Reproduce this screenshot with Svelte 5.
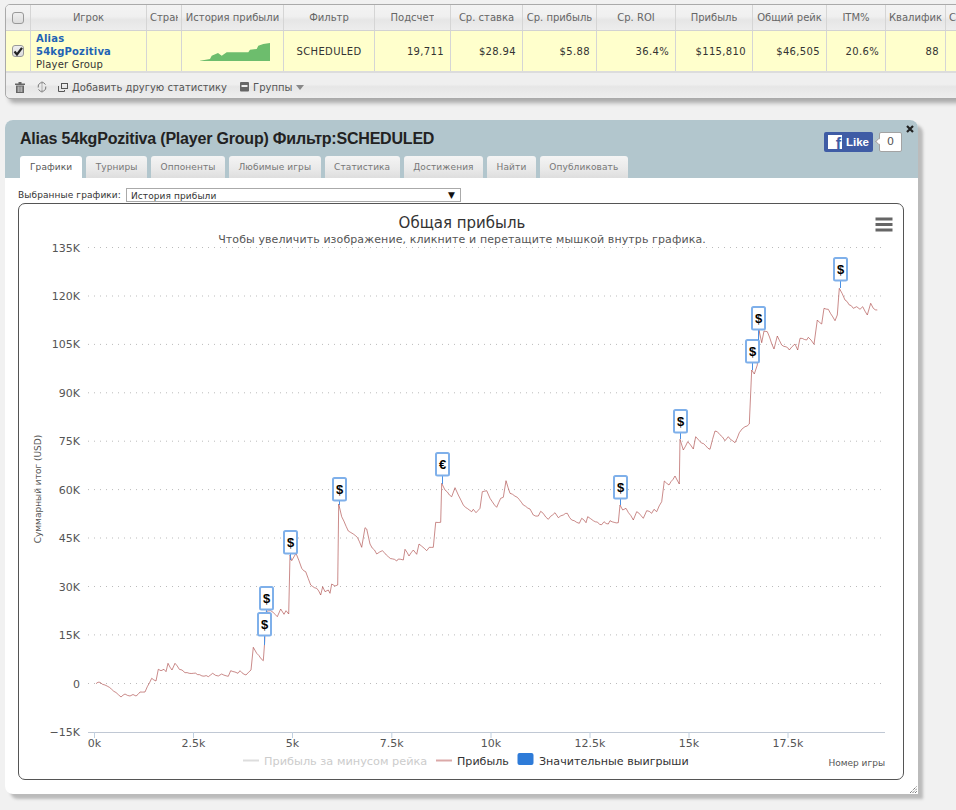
<script>
  const cols = [
    { h: 'Игрок', w: 116, a: 'c' },
    { h: 'Страна', w: 35, a: 'l' },
    { h: 'История прибыли', w: 102, a: 'c' },
    { h: 'Фильтр', w: 91, a: 'c', v: 'SCHEDULED' },
    { h: 'Подсчет', w: 76, a: 'c', v: '19,711' },
    { h: 'Ср. ставка', w: 72, a: 'c', v: '$28.94' },
    { h: 'Ср. прибыль', w: 74, a: 'c', v: '$5.88' },
    { h: 'Ср. ROI', w: 79, a: 'c', v: '36.4%' },
    { h: 'Прибыль', w: 77, a: 'c', v: '$115,810' },
    { h: 'Общий рейк', w: 74, a: 'c', v: '$46,505' },
    { h: 'ITM%', w: 59, a: 'c', v: '20.6%' },
    { h: 'Квалификация', w: 60, a: 'c', v: '88' },
    { h: 'Средний', w: 60, a: 'l', v: '' }
  ];
  const gridCols = '25px ' + cols.map((c) => c.w + 'px').join(' ');
  const tabs = ['Графики', 'Турниры', 'Оппоненты', 'Любимые игры', 'Статистика', 'Достижения', 'Найти', 'Опубликовать'];
  const yTicks = [
    ['135K', 247.5], ['120K', 296], ['105K', 344.4], ['90K', 392.8], ['75K', 441.2],
    ['60K', 489.6], ['45K', 538], ['30K', 586.5], ['15K', 634.9], ['0', 683.5]
  ];
  const xTicks = [['0k', 94.5], ['2.5k', 193.5], ['5k', 292.5], ['7.5k', 391.8], ['10k', 491], ['12.5k', 590], ['15k', 689], ['17.5k', 788]];
  const key = [
    [96,683.7],[100,682.3],[105,685],[111.7,689.3],[116,692.5],[121,697],[125,694],[130,696],[133,694.5],[136,696],[140,692],[145,692],[147.3,686.7],[151.7,678.3],[156,681],[158.3,669.3],[161,670.7],[164,669.3],[166,671.7],[168,663.3],[172,670],[175,663.3],[179.3,669.3],[182,670],[185,672.7],[193.3,673.3],[208.3,676.7],[212.7,673.3],[218.3,676],[221.7,674],[228.3,676.3],[230.7,670.7],[235,672],[238,673.3],[240,670.7],[246,675],[251,670],[253.3,647.3],[256.7,653.3],[263.3,660.7],[264.7,641.7],[266,611.7],[270.7,610.7],[277.3,616.7],[280.7,609],[284,614.3],[286,610.7],[288.7,614],[290,555],[291.7,560.7],[296,553.3],[301.7,568.3],[305.7,571.7],[310.7,585],[316.7,588.3],[320.7,595],[322.7,586.7],[325,591.7],[328.3,590],[330,593.3],[331.7,584],[335,586],[337.7,585],[338.7,504],[341.7,516.7],[348.3,531],[353.3,534],[357.3,537.3],[361.7,547.3],[365,527.7],[366.7,529],[370,544],[376.7,554],[382.3,550.7],[388.3,556.7],[396.7,561],[398.3,559],[403.3,560],[405,549.3],[409,556],[413.3,550],[416.7,554.3],[419,544],[426.7,550.7],[429.3,547.3],[433.3,547.3],[435.7,522.3],[440.7,522.3],[441.7,483.3],[445,490],[451.7,496.7],[455,487.7],[458.3,495],[463.3,505],[471.7,511.7],[473.3,509.3],[476,512.7],[480,508.3],[482.3,491.7],[486.7,490.7],[490,498.3],[496.7,507.3],[500.7,498.3],[503.3,497.3],[506,480.7],[510,493.3],[517.3,497.3],[523.3,505],[530,509],[533.3,515],[538.3,516],[540.7,511.3],[548.3,519.3],[555,512.7],[558.3,517.7],[563.3,515],[567.3,513.3],[571.7,520],[579.3,523.3],[581.7,518.3],[586,522.7],[587.7,516.7],[593.3,520.7],[601.7,524.7],[604,521.7],[608.3,524],[610,520.7],[618.3,522.7],[620,505],[622.7,510],[626,508.3],[633.3,520],[636.7,511.7],[643.3,518.3],[646.7,510.7],[651.7,513.3],[654,509.3],[656.7,511.7],[661.7,501.7],[664.3,481],[669,485],[675,476],[679.3,484],[680,439.3],[683.3,450],[687.7,441.7],[693.3,449],[695.7,436.7],[699.3,440.7],[710,449.3],[715,431],[717.3,431.7],[725,440.7],[728.3,436.7],[735,442.7],[739.3,432.7],[745,426.7],[749.3,424],[751.7,370],[754.3,374],[757.3,365],[759,330],[761.7,342.7],[764,331],[767.3,331.7],[774,349],[777.3,336],[781.7,345],[788.3,348.3],[789.3,350],[795,344],[797.7,350],[800,338.3],[806.7,340],[808.3,337.3],[814,344.3],[817.3,320],[821.7,324],[824,308.3],[828.3,309.3],[835,320.7],[837.3,315],[839.3,288.3],[845,300],[853.3,308.3],[856.7,306.7],[860,309.3],[862.7,306.7],[867.3,315],[870.7,303.3],[873.3,308.3],[877.3,310]
  ];
  // Fine jitter between the traced points, seeded so the picture is stable.
  let seed = 7;
  const rnd = () => ((seed = (seed * 16807) % 2147483647) / 2147483647 - 0.5);
  const pts = [];
  key.forEach((p, i) => {
    pts.push(p);
    const n = key[i + 1];
    if (!n) return;
    const steps = Math.floor((n[0] - p[0]) / 2);
    for (let s = 1; s < steps; s++) {
      const t = s / steps;
      pts.push([p[0] + (n[0] - p[0]) * t, p[1] + (n[1] - p[1]) * t + rnd() * 1.6]);
    }
  });
  const line = pts.map((p) => p[0].toFixed(1) + ',' + p[1].toFixed(1)).join(' ');
  const flags = [
    [264.5, 612.7, 645, '$'], [266.5, 586.7, 612, '$'], [290.5, 530.7, 560, '$'], [339.5, 477.7, 505, '$'],
    [442.5, 452.7, 484, '€'], [620.5, 475.7, 505, '$'], [680.5, 409.7, 439, '$'], [752.5, 339.7, 370, '$'],
    [758.5, 306.7, 340, '$'], [840.5, 257.7, 288, '$']
  ];
  const spark = 'M200 62L200 61.7L210 60L211.7 56.7L218 54L221.7 56.7L226.7 53.3L248.3 53.3L250 50.7L256.7 50L258.3 46.7L263.3 45L270 44L270 62Z';
</script>

<div class="page">
  <section class="stats">
    <div class="grid head" style="grid-template-columns:{gridCols}">
      <div class="cell"><span class="check"></span></div>
      {#each cols as c}
        <div class="cell {c.a}"><span class="clip">{c.h}</span></div>
      {/each}
    </div>
    <div class="grid row" style="grid-template-columns:{gridCols}">
      <div class="cell">
        <span class="check on">
          <svg viewBox="0 0 12 12" width="12" height="12"><path d="M2.5 6.5L5 9.5L10 2.8" fill="none" stroke="#222" stroke-width="2.2" /></svg>
        </span>
      </div>
      <div class="cell player">
        <a href="#top">Alias<br />54kgPozitiva</a>
        <div>Player Group</div>
      </div>
      <div class="cell"></div>
      <div class="cell">
        <svg class="spark" viewBox="183 40 100 24" width="100" height="24"><path d={spark} fill="#6dbd6d" /></svg>
      </div>
      {#each cols.slice(3) as c, i}
        <div class="cell {i === 0 ? 'c' : 'r'}">{c.v}</div>
      {/each}
    </div>
    <div class="toolbar">
      <svg class="ic trash" viewBox="0 0 10 11" width="10" height="11"><path d="M0 1.5H10V3H0ZM3.5 0H6.5V1.5H3.5ZM1 3.6H9V11H1Z" fill="#666" /><path d="M3.2 4.5V10M5 4.5V10M6.8 4.5V10" stroke="#eee" stroke-width=".8" /></svg>
      <svg class="ic swap" viewBox="0 0 10 12" width="10" height="12"><path d="M8.5 3.5A4 4 0 0 0 1.2 6.5M1.5 8.5A4 4 0 0 0 8.8 5.5" fill="none" stroke="#777" /><path d="M5 0V12" stroke="#999" stroke-width=".7" /></svg>
      <svg class="ic add" viewBox="0 0 10 9" width="10" height="9"><rect x="3.5" y=".5" width="6" height="5" fill="none" stroke="#555" /><path d="M.5 3V8.5H6.5V7" fill="none" stroke="#555" /></svg>
      <span class="tlabel">Добавить другую статистику</span>
      <svg class="ic group" viewBox="0 0 10 10" width="10" height="10"><rect width="9" height="9.5" rx="1" fill="#666" /><rect x="1.5" y="3" width="6" height="2" fill="#eee" /></svg>
      <span class="tlabel g">Группы</span>
      <span class="caret"></span>
    </div>
  </section>

  <section class="modal">
    <header class="mhead">
      <h1>Alias 54kgPozitiva (Player Group) Фильтр:SCHEDULED</h1>
      <div class="like">
        <span class="fb"><span class="fbf">f</span><b>Like</b></span>
        <span class="count">0</span>
      </div>
      <svg class="close" viewBox="0 0 8 8" width="8" height="8"><path d="M1 1L7 7M7 1L1 7" stroke="#222" stroke-width="2.2" /></svg>
      <nav class="tabs">
        {#each tabs as t, i}
          <span class="tab" class:active={i === 0}>{t}</span>
        {/each}
      </nav>
    </header>
    <div class="body">
      <div class="picker">
        <span>Выбранные графики:</span>
        <span class="select"><span>История прибыли</span><i>▼</i></span>
      </div>
      <div class="chart">
        <svg viewBox="19 204 884 575" width="884" height="575">
          <text class="t1" x="462" y="228" text-anchor="middle">Общая прибыль</text>
          <text class="t2" x="462" y="243" text-anchor="middle">Чтобы увеличить изображение, кликните и перетащите мышкой внутрь графика.</text>
          <path d="M875.5 219H892.5M875.5 224.5H892.5M875.5 230H892.5" stroke="#666" stroke-width="3" />
          {#each yTicks as [l, y]}
            <line x1="88" x2="885" y1={y} y2={y} stroke="#bbb" stroke-dasharray="1 5" />
            <text class="ax" x="80" y={y + 4} text-anchor="end">{l}</text>
          {/each}
          <text class="ax" x="80" y="736" text-anchor="end">−15K</text>
          <line x1="88" x2="885" y1="732.5" y2="732.5" stroke="#c0c8d4" />
          {#each xTicks as [l, x]}
            <line x1={x} x2={x} y1="732" y2="738" stroke="#c0d0e0" />
            <text class="ax" {x} y="747" text-anchor="middle">{l}</text>
          {/each}
          <text class="ytitle" transform="translate(41 489) rotate(-90)" text-anchor="middle">Суммарный итог (USD)</text>
          <polyline points={line} fill="none" stroke="#a94442" stroke-opacity=".62" stroke-linejoin="round" />
          {#each flags as [x, top, end, s]}
            <line x1={x} x2={x} y1={top + 22} y2={end} stroke="#4a90e2" />
            <rect x={x - 6.5} y={top + .3} width="13" height="22.6" rx="1.5" fill="#fff" stroke="#7fb0ea" stroke-width="2" />
            <text class="flag" {x} y={top + 16} text-anchor="middle">{s}</text>
          {/each}
          <line x1="243" x2="259" y1="760.5" y2="760.5" stroke="#ddd" stroke-width="2" />
          <text class="lg off" x="264" y="764.5">Прибыль за минусом рейка</text>
          <line x1="436" x2="452" y1="760.5" y2="760.5" stroke="#dba9a8" stroke-width="2" />
          <text class="lg" x="457" y="764.5">Прибыль</text>
          <rect x="517.5" y="753" width="16" height="12" rx="2" fill="#2e7bd8" />
          <text class="lg" x="539" y="764.5">Значительные выигрыши</text>
          <text class="xtitle" x="885" y="766" text-anchor="end">Номер игры</text>
        </svg>
      </div>
      <svg class="resize" viewBox="0 0 7 7" width="7" height="7"><path d="M0 7L7 0M2.5 7L7 2.5M5 7L7 5" stroke="#444" stroke-width="1" stroke-dasharray="1 1" /></svg>
    </div>
  </section>
</div>

<style>
  :global(body) { background: #f1f1f1; }
  .page {
    width: 956px;
    height: 810px;
    overflow: hidden;
    padding: 4px 0 0 5px;
    box-sizing: border-box;
    font: 10px "DejaVu Sans", sans-serif;
    color: #333;
    background: #f1f1f1;
  }
  .stats {
    width: 1040px;
    height: 95px;
    box-sizing: border-box;
    border: 1px solid #aaa;
    border-radius: 5px 0 0 5px;
    background: #eee;
    box-shadow: 4px 4px 4px #aaa;
  }
  .grid { display: grid; }
  .head {
    height: 26px;
    box-sizing: border-box;
    background: linear-gradient(#f3f3f3 0, #f0f0f0 45%, #e6e6e6 60%, #ededed 100%);
    border-bottom: 1px solid #d2d2d2;
    border-radius: 4px 0 0 0;
    color: #666;
  }
  .row {
    height: 42px;
    box-sizing: border-box;
    background: #ffffcc;
    border-bottom: 2px solid #dcdcdc;
    color: #333;
  }
  .cell {
    display: flex;
    align-items: center;
    justify-content: center;
    padding: 0 3px;
    border-right: 1px solid #d5d5d5;
    box-sizing: border-box;
    min-width: 0;
    white-space: nowrap;
  }
  .cell.l { justify-content: flex-start; }
  .cell.r { justify-content: flex-end; padding-right: 6px; }
  .clip { overflow: hidden; display: block; }
  .row .cell { letter-spacing: .35px; }
  .check {
    width: 10px;
    height: 10px;
    border: 1px solid #999;
    border-radius: 3px;
    background: linear-gradient(#eee, #ddd);
    display: block;
    position: relative;
  }
  .check svg { display: block; margin: -1px; }
  .player {
    display: block;
    justify-content: flex-start;
    padding: 1px 0 0 5px;
    line-height: 13px;
  }
  .row .player { letter-spacing: .2px; }
  .player a { color: #1f63b5; font-weight: 700; text-decoration: none; }
  .spark { display: block; flex: none; }
  .toolbar {
    height: 25px;
    box-sizing: border-box;
    padding: 3px 0 0 9px;
    display: flex;
    align-items: center;
    background: linear-gradient(#efefef 0, #efefef 45%, #e6e6e6 55%, #eee 100%);
    color: #555;
    border-radius: 0 0 0 5px;
  }
  .toolbar .swap { margin-left: 12px; }
  .toolbar .add { margin-left: 11px; }
  .tlabel { margin-left: 4px; }
  .toolbar .group { margin-left: 13px; }
  .tlabel.g { margin-left: 3px; }
  .caret {
    margin-left: 4px;
    border: 4px solid transparent;
    border-top: 5px solid #888;
    border-bottom: 0;
  }
  .modal {
    margin-top: 21px;
    width: 913px;
    height: 674px;
    background: #fff;
    border-radius: 8px 8px 0 8px;
    box-shadow: 5px 5px 3px #bbb;
    position: relative;
    display: flex;
    flex-direction: column;
  }
  .mhead {
    height: 58px;
    background: #b2c6cd;
    border-radius: 8px 8px 0 0;
    position: relative;
    padding: 9px 0 0 15px;
    box-sizing: border-box;
  }
  h1 {
    margin: 0;
    font: 700 16px/20px "Liberation Sans", sans-serif;
    letter-spacing: -.2px;
    color: #222;
  }
  .like {
    position: absolute;
    top: 12px;
    right: 16px;
    display: flex;
    gap: 6px;
  }
  .fb {
    width: 49px;
    height: 20px;
    box-sizing: border-box;
    background: #3f5ca5;
    border-radius: 2px;
    display: flex;
    align-items: center;
    padding-left: 4px;
    color: #fff;
    font: 700 11.5px "Liberation Sans", sans-serif;
  }
  .fbf {
    width: 14px;
    height: 14px;
    background: #fff;
    color: #3f5ca5;
    font: 700 16px/17px "Liberation Sans", sans-serif;
    text-align: right;
    padding-right: 1px;
    box-sizing: border-box;
    margin-right: 4px;
    overflow: hidden;
  }
  .count {
    width: 23px;
    height: 20px;
    box-sizing: border-box;
    background: #fff;
    border: 1px solid #a3a3a3;
    border-radius: 2px;
    text-align: center;
    line-height: 18px;
    font-size: 11px;
    color: #555;
    position: relative;
  }
  .count::before {
    content: "";
    position: absolute;
    left: -4px;
    top: 6px;
    width: 5px;
    height: 5px;
    background: #fff;
    transform: rotate(45deg);
    border-left: 1px solid #a3a3a3;
    border-bottom: 1px solid #a3a3a3;
    box-sizing: border-box;
  }
  .close { position: absolute; top: 5px; right: 4px; }
  .tabs {
    position: absolute;
    left: 15px;
    bottom: 0;
    display: flex;
    gap: 4px;
  }
  .tab {
    height: 22px;
    line-height: 22px;
    padding: 0 9.5px;
    border-radius: 3px 3px 0 0;
    background: linear-gradient(#f4f4f4, #e9e9e9 60%, #dedede);
    color: #777;
    font-size: 9px;
    letter-spacing: .1px;
  }
  .tab.active { background: #fff; color: #555; padding: 0 10px; }
  .body { padding: 10px 0 0 13px; position: relative; flex: 1; }
  .picker {
    display: flex;
    align-items: center;
    gap: 5px;
    height: 14px;
    color: #333;
    line-height: 15px;
    font-size: 9px;
    letter-spacing: .1px;
  }
  .select {
    width: 335px;
    height: 14px;
    box-sizing: border-box;
    border: 1px solid #aaa;
    display: flex;
    justify-content: space-between;
    padding: 0 5px 0 4px;
    line-height: 14px;
    background: #fff;
  }
  .select i { font-style: normal; font-size: 9px; line-height: 12px; color: #111; }
  .chart {
    margin-top: 1px;
    width: 886px;
    height: 577px;
    box-sizing: border-box;
    border: 1px solid #555;
    border-radius: 7px;
    overflow: hidden;
  }
  .chart svg { display: block; }
  .chart text { font-family: "DejaVu Sans", sans-serif; }
  .t1 { font-size: 15px; fill: #333; }
  .t2 { font-size: 11px; fill: #555; letter-spacing: .1px; }
  .ax { font-size: 11px; fill: #555; }
  .ytitle { font-size: 9px; fill: #555; }
  .xtitle { font-size: 9px; fill: #555; }
  .lg { font-size: 11.1px; fill: #333; }
  .lg.off { fill: #ccc; font-size: 11.3px; }
  .chart .flag { font: 700 13px "Liberation Sans", sans-serif; fill: #000; }
  .resize { position: absolute; right: 1px; bottom: 1px; }
</style>
